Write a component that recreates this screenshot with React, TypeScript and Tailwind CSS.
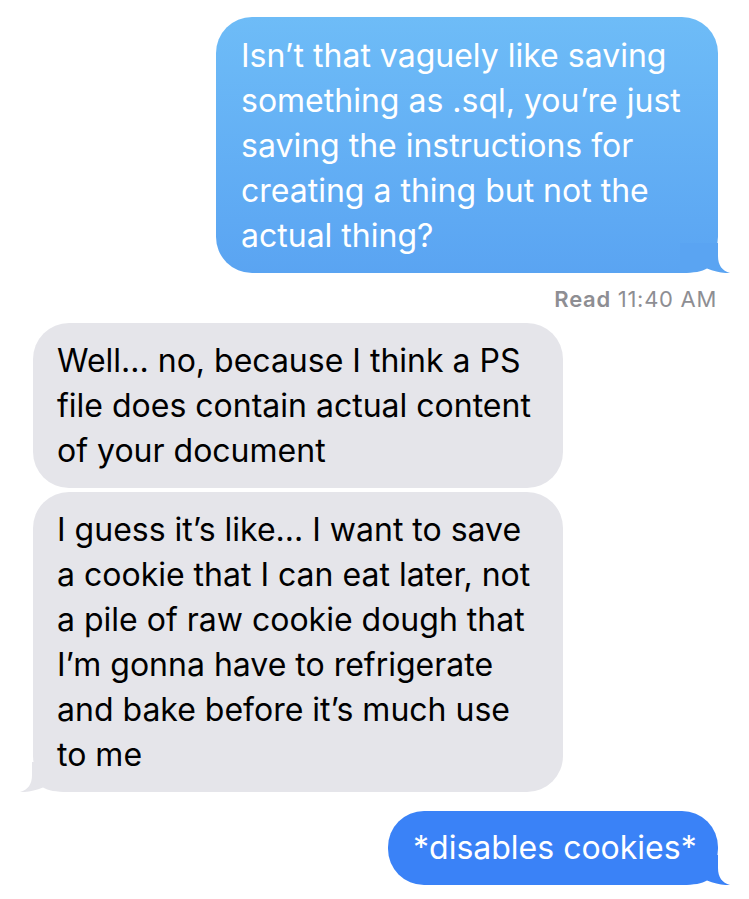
import React from "react";

const font = { fontFamily: "Inter, 'Noto Sans', sans-serif" };

function TailRight({ color }: { color: string }) {
  return (
    <svg
      className="absolute bottom-0 right-[-12px]"
      width="50"
      height="30"
      viewBox="0 0 50 30"
    >
      <path
        d="M0 30 L0 0 L38 0 L38 13 C38 22 42 28 50 30 C43 30.5 35 28.5 27 25.5 C22 28.5 14 30 2 30 Z"
        fill={color}
      />
    </svg>
  );
}

function TailLeft({ color }: { color: string }) {
  return (
    <svg
      className="absolute bottom-0 left-[-13px]"
      width="50"
      height="30"
      viewBox="0 0 50 30"
    >
      <path
        d="M50 30 L50 0 L12 0 L12 13 C12 22 8 28 0 30 C7 30.5 15 28.5 23 25.5 C28 28.5 36 30 48 30 Z"
        fill={color}
      />
    </svg>
  );
}

function Lines({ lines }: { lines: string[] }) {
  return (
    <>
      {lines.map((l, i) => (
        <div key={i} className="whitespace-nowrap">
          {l}
        </div>
      ))}
    </>
  );
}

export default function App() {
  return (
    <div
      className="w-[749px] h-[899px] bg-white flex flex-col overflow-hidden pt-[17px]"
      style={font}
    >
      <div className="flex justify-end pr-[31px]">
        <div className="relative w-[502px] h-[256px] rounded-[36px] bg-gradient-to-b from-[#6ebcf7] to-[#5aa4f2] px-[25px] py-[16px] text-white text-[32px] leading-[45px]">
          <div className="relative z-10">
            <Lines
              lines={[
                "Isn\u2019t that vaguely like saving",
                "something as .sql, you\u2019re just",
                "saving the instructions for",
                "creating a thing but not the",
                "actual thing?",
              ]}
            />
          </div>
          <TailRight color="#5aa4f2" />
        </div>
      </div>

      <div className="flex justify-end pr-[32px] mt-[13px] text-[22px] leading-[26px] tracking-[0.7px] text-[#8e8e93]">
        <span className="font-semibold">Read</span>
        <span className="ml-[7px]">11:40 AM</span>
      </div>

      <div className="flex flex-col pl-[33px] mt-[11px] gap-[4px]">
        <div className="w-[530px] h-[165px] rounded-[36px] bg-[#e5e5ea] px-[24px] py-[15px] text-black text-[32px] leading-[45px]">
          <Lines
            lines={[
              "Well... no, because I think a PS",
              "file does contain actual content",
              "of your document",
            ]}
          />
        </div>
        <div className="relative w-[530px] h-[300px] rounded-[36px] bg-[#e5e5ea] px-[24px] py-[15px] text-black text-[32px] leading-[45px]">
          <div className="relative z-10">
            <Lines
              lines={[
                "I guess it\u2019s like... I want to save",
                "a cookie that I can eat later, not",
                "a pile of raw cookie dough that",
                "I\u2019m gonna have to refrigerate",
                "and bake before it\u2019s much use",
                "to me",
              ]}
            />
          </div>
          <TailLeft color="#e5e5ea" />
        </div>
      </div>

      <div className="flex justify-end pr-[31px] mt-[19px]">
        <div className="relative w-[330px] h-[74px] rounded-[36px] bg-[#3a82f7] px-[25px] py-[14px] text-white text-[32px] leading-[45px]">
          <div className="relative z-10">
            <Lines lines={["*disables cookies*"]} />
          </div>
          <TailRight color="#3a82f7" />
        </div>
      </div>
    </div>
  );
}
